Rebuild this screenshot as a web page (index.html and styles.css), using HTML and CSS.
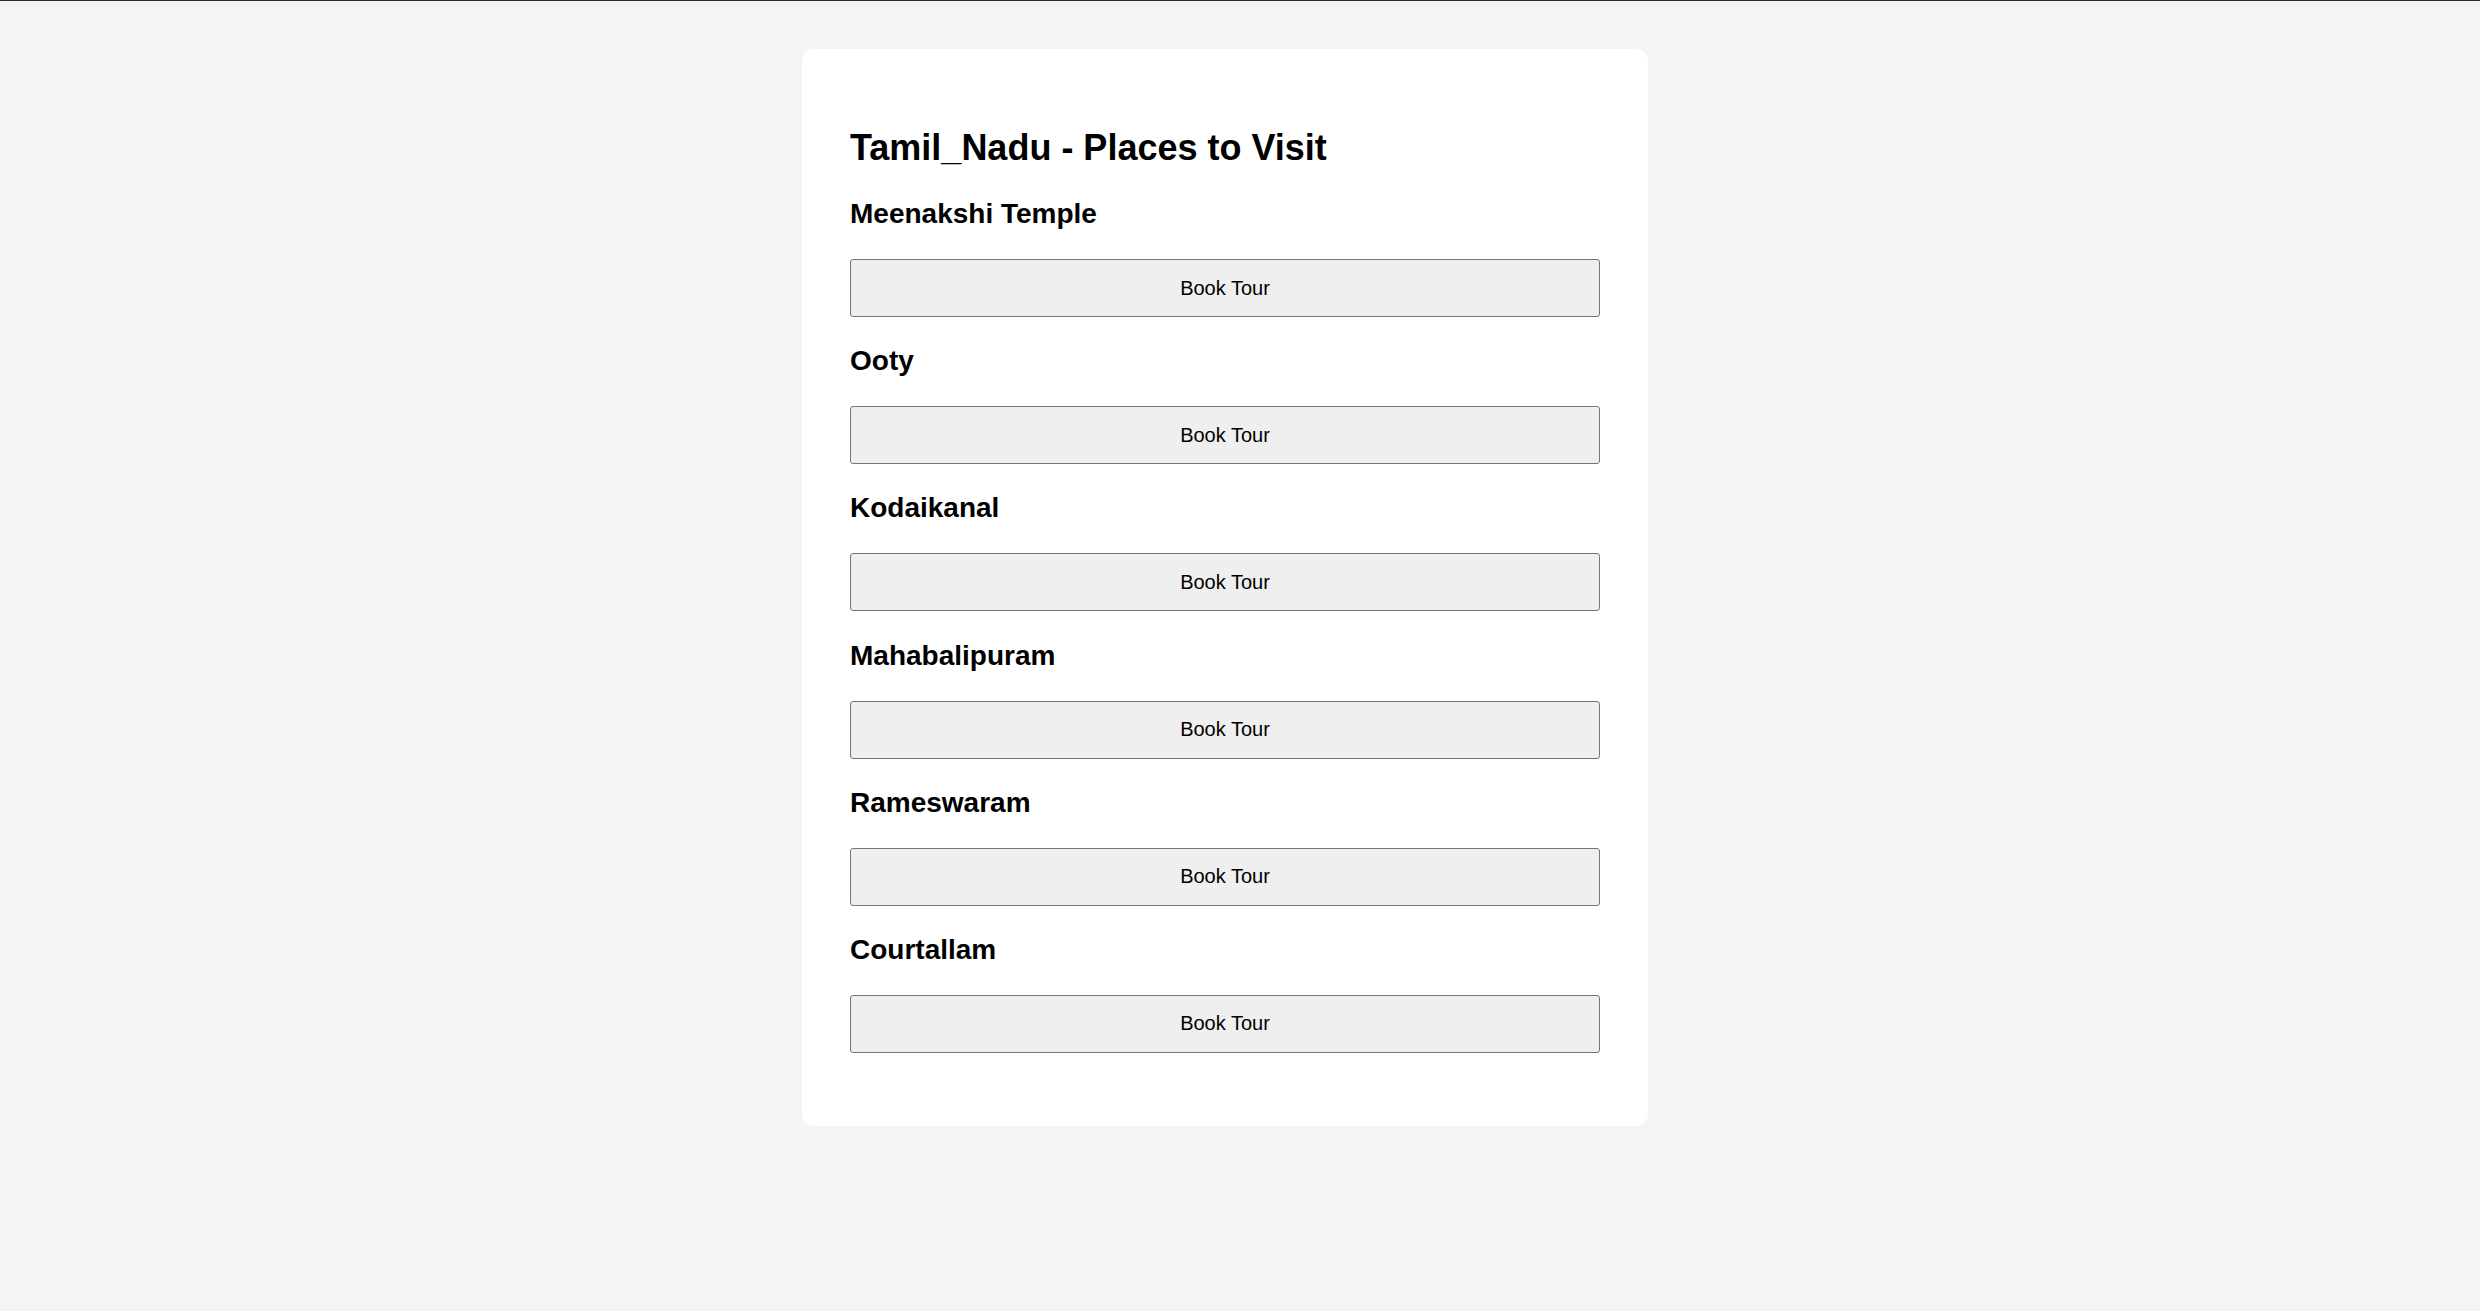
FILE: index.html
```html
<!DOCTYPE html>
<html lang="en">
<head>
<meta charset="utf-8">
<title>Tamil_Nadu - Places to Visit</title>
<link rel="stylesheet" href="styles.css">
</head>
<body>
<div class="page">
  <div class="card">
    <h2 class="title">Tamil_Nadu - Places to Visit</h2>
    <h3 class="place">Meenakshi Temple</h3>
    <button class="book">Book Tour</button>
    <h3 class="place">Ooty</h3>
    <button class="book">Book Tour</button>
    <h3 class="place">Kodaikanal</h3>
    <button class="book">Book Tour</button>
    <h3 class="place">Mahabalipuram</h3>
    <button class="book">Book Tour</button>
    <h3 class="place">Rameswaram</h3>
    <button class="book">Book Tour</button>
    <h3 class="place">Courtallam</h3>
    <button class="book">Book Tour</button>
  </div>
</div>
</body>
</html>
```
FILE: styles.css
```css
html, body {
  margin: 0;
  padding: 0;
}
body {
  background: #f4f4f4;
  border-top: 1px solid #2b2b2b;
  font-family: "Liberation Sans", Arial, sans-serif;
  color: #000;
  min-height: 1310px;
}
.page {
  display: flex;
  justify-content: center;
  padding: 48px 30px 0 0;
}
.card {
  width: 846px;
  box-sizing: border-box;
  background: #fff;
  border-radius: 12px;
  padding: 48px;
  display: flow-root;
}
.title {
  font-size: 36px;
  line-height: 41px;
  font-weight: bold;
  margin: 30px 0 30px 0;
}
.place {
  font-size: 28px;
  line-height: 32px;
  font-weight: bold;
  margin: 28.2px 0 29px 0;
}
.book {
  display: block;
  width: 100%;
  height: 58px;
  box-sizing: border-box;
  margin: 0 0 25px 0;
  padding: 0;
  background: #efefef;
  border: 1px solid #767676;
  border-radius: 3px;
  font-family: "Liberation Sans", Arial, sans-serif;
  font-size: 20px;
  color: #000;
}
```
